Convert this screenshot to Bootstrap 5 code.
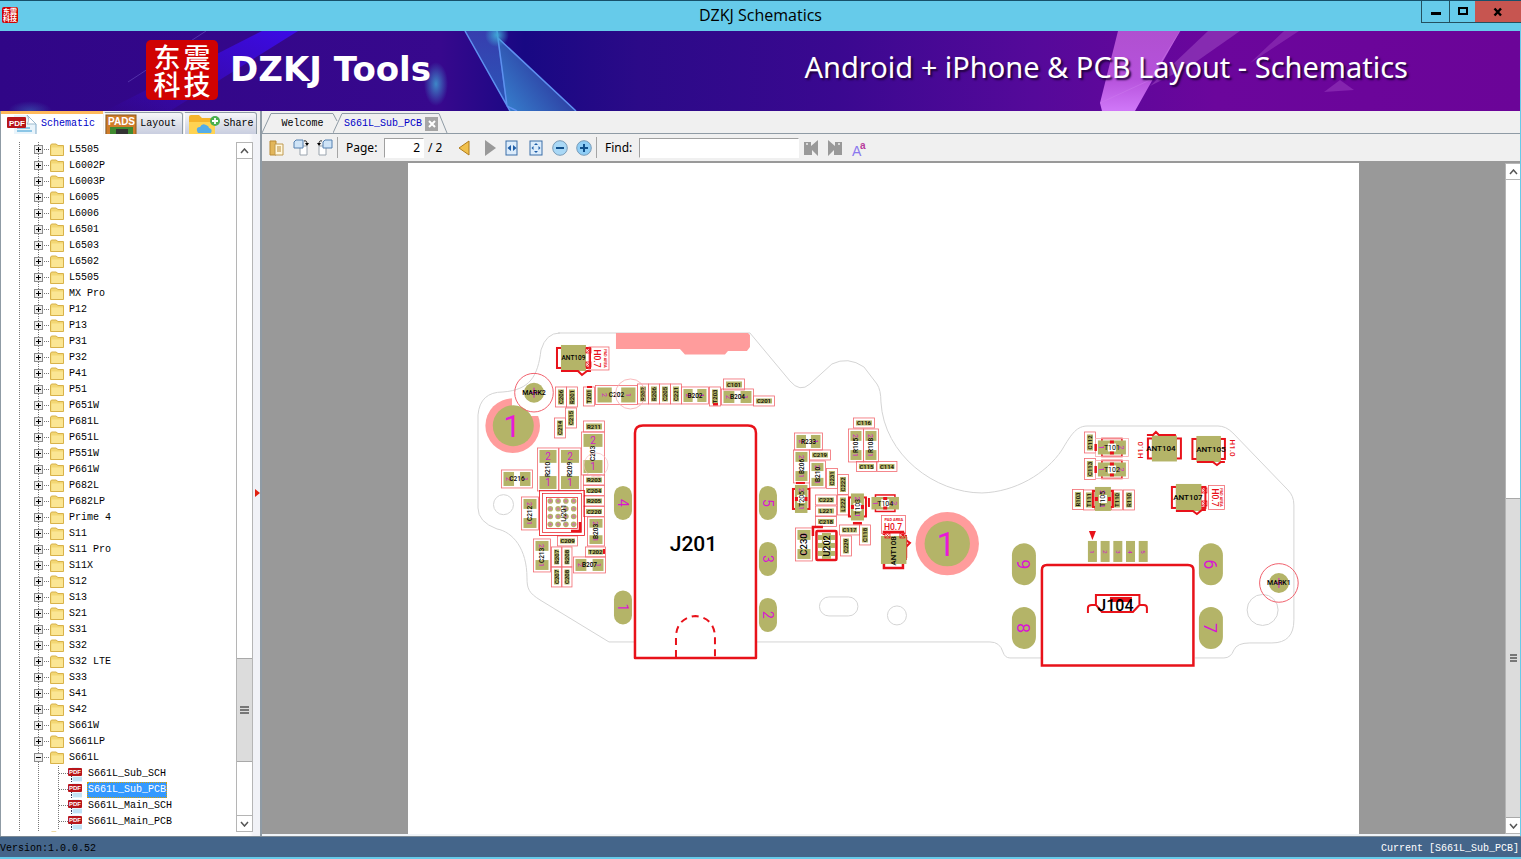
<!DOCTYPE html>
<html lang="en">
<head>
<meta charset="utf-8">
<meta name="viewport" content="width=device-width, initial-scale=1">
<title>DZKJ Schematics</title>
<link href="https://cdn.jsdelivr.net/npm/bootstrap@5.3.0/dist/css/bootstrap.min.css" rel="stylesheet">
<style>
:root{--sky:#66cbea;--slate:#8f9ba5;--face:#f0f0f0}
body{font-family:"Liberation Mono",monospace;font-size:10px;line-height:16px;color:#000;background:var(--sky);overflow:hidden}
button,.plain-link{font:inherit;color:inherit;background:none;border:0;padding:0;text-decoration:none}
.ui-font{font-family:"Noto Sans","Open Sans",sans-serif}
.title-row{height:31px;background:var(--sky);border-top:1px solid #17506a}
.title-text{font-size:16px;line-height:29px;font-family:"Open Sans","Noto Sans",sans-serif}
.logo-box{display:grid;grid-template-columns:1fr 1fr;place-items:center;background:#d00202;color:#fff;font-family:"Noto Sans CJK SC",sans-serif;font-weight:700}
.logo-small{width:16px;height:16px;border-radius:2px;font-size:7px;line-height:7px;padding:1px;margin-left:2px;margin-top:-2px}
.logo-large{width:72px;height:60px;border-radius:5px;font-size:27px;line-height:26px;padding:3px 6px;margin-left:146px;margin-top:-2px;font-weight:500}
.win-buttons{height:22px;border:1px solid #24505f;border-top:0;border-right:0}
.win-buttons button{display:grid;place-items:center}
.win-min{width:27px}.win-max{width:26px;border-left:1px solid #24505f!important}
.win-close{width:46px;background:#c75550!important}
.frame{margin-right:1px}
.banner{height:80px;overflow:hidden;background:#32088a}
.brand{font-family:"DejaVu Sans",sans-serif;font-size:34px;font-weight:700;line-height:60px;color:#fff;margin-left:12px;margin-top:-4px}
.slogan{font-family:"Noto Sans",sans-serif;font-size:29px;font-weight:400;line-height:60px;color:#fff;margin-right:112px;margin-top:-8px;text-shadow:2px 2px 2px #21033e}
.side{width:262px;background:#fff;border-left:1px solid var(--slate);border-right:2px solid var(--slate)}
.side-tabs{height:23px;background:var(--face);gap:1px;padding-right:3px}
.side-tab{height:23px;border:1px solid var(--slate)!important;border-left-color:#fff!important;background:linear-gradient(#f7f7fa,#dcdfe9 55%,#c9cee0)!important;gap:3px;margin-top:1px;border-top-right-radius:3px;overflow:hidden}
.side-tab.on{background:#fff!important;border:0!important;border-top:3px solid #ffb95a!important;border-radius:0;color:#0000c8;margin-top:0}
.side-tab svg{flex:none}
.tree-wrap{padding:8px 3px 4px 0;background:linear-gradient(to left,#f1f2f7 3px,#fff 7px)}
.tree{padding-left:18px;margin:0;list-style:none;overflow:hidden;height:0;min-height:100%;
 background:repeating-linear-gradient(#777 0 1px,#fff 1px 2px) 18px 0/1px 100% no-repeat,repeating-linear-gradient(#777 0 1px,#fff 1px 2px) 37px 0/1px 100% no-repeat}
.tree li{height:16px}
.tree a{height:16px;padding-left:15px}
.twig{width:16px;height:16px;flex:none}
.tree .sheet-row{padding-left:38px}
.row-label{padding:0 1px;margin-left:2px;line-height:14px;height:16px;padding-top:1px}
.row-label.sel{background:#3399ff;color:#fff;outline:1px dotted #d9a300;outline-offset:-1px}
.bar{border-left:1px solid #b5b5b5;background:#fff}
.bar-side{width:17px;border-right:1px solid #b5b5b5}
.bar-doc{width:15px;border-top:1px solid #b5b5b5}
.bar button{height:16px;display:grid;place-items:center;border-bottom:1px solid #b5b5b5}
.bar-side{border-top:1px solid #b5b5b5}
.bar .last{border-bottom:1px solid #b5b5b5;border-top:0}
.thumb{background:#dcdcdc;border:solid #a9a9a9;border-width:1px 0;display:grid;place-items:center}
.splitter{width:4px;background:#f1f2f7;display:grid;align-items:center}
.doc-tabs{height:23px;background:var(--face);border-bottom:1px solid var(--slate)}
.doc-tab{height:20px;border-top:1px solid var(--slate)!important;line-height:20px}
.edge{width:10px;height:20px;flex:none}
.close-x{width:14px;height:14px;background:#a5a5a5!important;display:grid;place-items:center}
.tools{height:27px;background:var(--face);font-size:12px;padding-left:7px}
.tool{width:16px;height:18px;display:grid;place-items:center}
.tools .rule-v{width:1px;height:21px;background:#a5a5a5}
.tools input{height:20px;border:1px solid #a0a0a0;border-right-color:#fff;border-bottom-color:#fff;background:#fff;border-radius:0;padding:0 3px;font:inherit;outline:0}
.page-no{width:40px;text-align:right}.find-in{width:160px}
.desk{background:#999;border-top:2px solid #999;overflow:hidden}
.sheet{width:76.5%;background:#fff;min-height:100%}
.status{height:21px;background:#44658a;border-top:1px solid #7c8a96;line-height:24px;margin-bottom:2px}
.cad{font-family:Roboto,"Liberation Sans",sans-serif}
</style>
</head>
<body class="vh-100 d-flex flex-column">
<header class="title-row d-flex justify-content-between position-relative">
  <div class="d-flex align-items-center"><span class="logo-box logo-small"><span>东</span><span>震</span><span>科</span><span>技</span></span></div>
  <div class="title-text position-absolute start-50 translate-middle-x">DZKJ Schematics</div>
  <div class="win-buttons d-flex">
    <button class="win-min" aria-label="Minimize"><svg width="12" height="12"><rect x="1" y="6" width="10" height="3"/></svg></button>
    <button class="win-max" aria-label="Maximize"><svg width="12" height="12"><rect x="2" y="2" width="8" height="6" fill="none" stroke="#000" stroke-width="2"/></svg></button>
    <button class="win-close" aria-label="Close"><svg width="12" height="10"><path d="M2.500 1.500 9 8.500M9 1.500 2.500 8.500" stroke="#000" stroke-width="2.400"/></svg></button>
  </div>
</header>

<section class="banner frame position-relative d-flex align-items-center flex-shrink-0">
  <svg class="position-absolute w-100 h-100 top-0 start-0" viewBox="0 31 1520 80" preserveAspectRatio="none" aria-hidden="true">
    <defs>
      <linearGradient id="sky"><stop offset="0" stop-color="#300687"/><stop offset=".29" stop-color="#37088d"/><stop offset=".345" stop-color="#180883"/><stop offset=".42" stop-color="#2b0a88"/><stop offset=".55" stop-color="#3a0890"/><stop offset=".68" stop-color="#55099a"/><stop offset=".8" stop-color="#6b069c"/><stop offset="1" stop-color="#6b0498"/></linearGradient>
      <linearGradient id="ray" x1="1" y1="0" x2="0" y2="1"><stop offset="0" stop-color="#3c0be6"/><stop offset="1" stop-color="#3c0be6" stop-opacity="0"/></linearGradient>
      <linearGradient id="prism" x1="0" y1="0" x2="0" y2="1"><stop offset="0" stop-color="#3a4bb8"/><stop offset="1" stop-color="#2e6cc4"/></linearGradient>
      <linearGradient id="prism2" x1="0" y1="1" x2="1" y2=".3"><stop offset="0" stop-color="#3787d2"/><stop offset="1" stop-color="#2a2290"/></linearGradient>
      <linearGradient id="pink" x1="0" y1="0" x2="0" y2="1"><stop offset="0" stop-color="#b050d0"/><stop offset=".6" stop-color="#b652dc"/><stop offset="1" stop-color="#d078f8"/></linearGradient>
      <radialGradient id="glow"><stop offset="0" stop-color="#3fa6d6"/><stop offset="1" stop-color="#3fa6d6" stop-opacity="0"/></radialGradient>
    </defs>
    <rect y="31" width="1520" height="80" fill="url(#sky)"/>
    <path d="M262 31H298L170 111H105Z" fill="url(#ray)"/>
    <path d="M206 31 128 82M186 50 150 74" stroke="#6a4fc0" stroke-width="1" opacity=".6"/>
    <ellipse cx="436" cy="84" rx="12" ry="22" fill="url(#glow)" opacity=".8"/>
    <ellipse cx="30" cy="111" rx="22" ry="10" fill="url(#glow)" opacity=".35"/>
    <path d="M465 31H497L507 105 510 111Z" fill="url(#prism)" opacity=".8"/>
    <path d="M497 37 576 111H510L506 104Z" fill="url(#prism2)"/>
    <path d="M465 31 510 111M497 31 507 106 517 111M498 38 576 111" fill="none" stroke="#5e90f0" stroke-width="1.500"/>
    <circle cx="497" cy="35" r="12" fill="url(#glow)"/>
    <path d="M1118 31H1180L1135 111H1102L1100 103Z" fill="url(#pink)"/>
    <path d="M1208 31H1240L1190 66 1150 86Z" fill="#9a44c0" opacity=".6"/>
    <path d="M1284 31H1299L1250 63Z" fill="#8c2fb4" opacity=".7"/>
    <path d="M1324 92 1340 80 1354 90Z" fill="#8424ae"/>
    <path d="M1100 103 1150 80 1180 31" fill="none" stroke="#cf80ee" opacity=".4"/>
  </svg>
  <div class="logo-box logo-large position-relative"><span>东</span><span>震</span><span>科</span><span>技</span></div>
  <div class="brand position-relative">DZKJ Tools</div>
  <div class="slogan position-relative ms-auto">Android + iPhone &amp; PCB Layout - Schematics</div>
</section>

<main class="frame d-flex flex-grow-1" style="min-height:0">
  <aside class="side d-flex flex-column flex-shrink-0">
    <nav class="side-tabs d-flex flex-shrink-0">
      <button class="side-tab on d-flex align-items-center" style="width:103px">
        <svg width="33" height="20" class="ms-1"><path d="M9 1H22L31 10V20H9Z" fill="#e9f4fb"/><path d="M22 1 31 10V20" fill="none" stroke="#7da9c8"/><path d="M22 1C25 5 23 9 22 10H31Z" fill="#fff" stroke="#9dbbd0"/><path d="M12 14H25M12 17H27" stroke="#8cc6e6" stroke-width="2"/><rect x="2" y="3" width="19" height="11" rx="1" fill="#b8151a"/><text x="4" y="12" font-size="8" font-weight="700" font-family="Liberation Sans" fill="#fff">PDF</text></svg>Schematic</button>
      <button class="side-tab d-flex align-items-center" style="width:79px">
        <svg width="32" height="22"><rect x="1" y="2" width="30" height="24" fill="#cf7c2a" stroke="#8c5a1c"/><text x="3" y="12" font-size="10" font-weight="700" font-family="Liberation Sans" fill="#fff">PADS</text><path d="M5 14H28V22H5Z" fill="#3f8a30"/><path d="M11 16H23V22H11Z" fill="#333"/></svg>Layout</button>
      <button class="side-tab d-flex align-items-center" style="width:74px">
        <svg width="32" height="22" class="ms-1"><path d="M0 4Q0 2 2 2H10L13 5H25Q26 5 26 8V22H0Z" fill="#f6b42a"/><path d="M0 9H26V22H0Z" fill="#ffd352"/><path d="M8 18Q7 14 11 14Q13 10 17 12Q20 13 20 15Q24 16 22 20H9Z" fill="#55ade8"/><circle cx="26" cy="8" r="5" fill="#49b04e"/><path d="M26 5V11M23 8H29" stroke="#fff" stroke-width="1.800"/></svg>Share</button>
    </nav>
    <div class="d-flex flex-grow-1" style="min-height:0">
      <div class="tree-wrap d-flex flex-grow-1">
        <ul class="tree flex-grow-1" id="tree"></ul>
        <div class="bar bar-side d-flex flex-column">
          <button aria-label="Scroll up"><svg width="9" height="6"><path d="M1 5 4.500 1 8 5" fill="none" stroke="#555" stroke-width="1.500"/></svg></button>
          <div style="flex:501"></div><div class="thumb" style="flex:103"><svg width="9" height="8"><path d="M0 1H9M0 4H9M0 7H9" stroke="#555" stroke-width="1.500"/></svg></div><div style="flex:53;border-bottom:1px solid #b5b5b5"></div>
          <button class="last" aria-label="Scroll down"><svg width="9" height="6"><path d="M1 1 4.500 5 8 1" fill="none" stroke="#555" stroke-width="1.500"/></svg></button>
        </div>
      </div>
      <div class="splitter position-relative flex-shrink-0"><svg class="position-absolute end-0 mt-3" width="6" height="8"><path d="M1 0 6 4 1 8Z" fill="#e02010"/></svg></div>
    </div>
  </aside>

  <section class="d-flex flex-column flex-grow-1" style="min-width:0">
    <nav class="doc-tabs d-flex align-items-end flex-shrink-0">
      <svg class="edge"><path d="M0 20 9 0.500H10" fill="none" stroke="#8f9ba5"/></svg>
      <button class="doc-tab" style="width:61px">Welcome</button>
      <svg class="edge"><path d="M0 .500 4 8M0 20 9 .500H10" fill="none" stroke="#8f9ba5"/></svg>
      <div class="doc-tab d-flex align-items-center" style="color:#0000c8;width:95px;gap:3px;padding-left:1px"><button>S661L_Sub_PCB</button><button class="close-x" aria-label="Close tab"><svg width="8" height="8"><path d="M1 1 7 7M7 1 1 7" stroke="#fff" stroke-width="2"/></svg></button></div>
      <svg class="edge"><path d="M0 .500H1L9 20" fill="none" stroke="#8f9ba5"/></svg>
    </nav>
    <div class="tools ui-font d-flex align-items-center flex-shrink-0">
      <button class="tool" aria-label="Open"><svg width="16" height="16"><path d="M1 1H7V15H1Z" fill="#e2b65a" stroke="#b98a35"/><path d="M6 4H14V15H6Z" fill="#fff7dc" stroke="#c09a50"/><path d="M8 7H12M8 9H12M8 11H12" stroke="#b98a35"/></svg></button>
      <button class="tool ms-2" aria-label="Rotate right"><svg width="16" height="17"><path d="M7 7H14V16H7Z" fill="#fff" stroke="#9aa4ae"/><path d="M3 1H10V9H1V3Z" fill="#cfe4f7" stroke="#5580b0"/><path d="M11 2Q14 1 14 5" fill="none" stroke="#222"/><path d="M12 4H16L14 7Z"/></svg></button>
      <button class="tool ms-2" aria-label="Rotate left"><svg width="16" height="17"><path d="M2 7H9V16H2Z" fill="#fff" stroke="#9aa4ae"/><path d="M8 1H15V9H6V3Z" fill="#cfe4f7" stroke="#5580b0"/><path d="M5 2Q2 1 2 5" fill="none" stroke="#222"/><path d="M0 4H4L2 7Z"/></svg></button>
      <span class="rule-v ms-1 me-2"></span>
      <label for="page-no" style="width:38px">Page:</label>
      <input id="page-no" class="page-no" value="2"><span class="ms-1" style="width:20px">/ 2</span>
      <button class="tool ms-2" aria-label="Previous page"><svg width="12" height="16"><path d="M11 1V15L1 8Z" fill="#f0c04c" stroke="#b07c1c"/></svg></button>
      <button class="tool ms-2 ps-1" aria-label="Next page"><svg width="12" height="16"><path d="M1 0V16L12 8Z" fill="#999"/></svg></button>
      <button class="tool ms-2" aria-label="Fit width"><svg width="14" height="16"><rect x="1" y="1" width="11" height="14" fill="#dcecfb" stroke="#3a6ea8"/><path d="M6 5V11L2.500 8ZM8 5V11L11.500 8Z" fill="#1f5ea8"/></svg></button>
      <button class="tool ms-2" aria-label="Fit page"><svg width="14" height="16"><rect x="1" y="1" width="12" height="14" fill="#dcecfb" stroke="#3a6ea8"/><path d="M7 3 9 5H5ZM7 13 9 11H5ZM2.500 8 4.500 6V10ZM11.500 8 9.500 6V10Z" fill="#1f5ea8"/></svg></button>
      <button class="tool ms-2" aria-label="Zoom out"><svg width="16" height="16"><circle cx="8" cy="8" r="7.300" fill="#a9d8f6" stroke="#7a9cb8"/><path d="M4 8H12" stroke="#10508c" stroke-width="2"/></svg></button>
      <button class="tool ms-2" aria-label="Zoom in"><svg width="16" height="16"><circle cx="8" cy="8" r="7.300" fill="#8fcdf5" stroke="#7a9cb8"/><path d="M4 8H12M8 4V12" stroke="#10508c" stroke-width="2"/></svg></button>
      <span class="rule-v ms-1 me-2"></span>
      <label for="find-in" style="width:34px">Find:</label>
      <input id="find-in" class="find-in">
      <button class="tool ms-1" aria-label="Find previous"><svg width="16" height="16"><path d="M1 2H8V6L15 0V16L9 10V15H1Z" fill="#999"/><circle cx="4" cy="4" r="1" fill="#eee"/></svg></button>
      <button class="tool ms-2" aria-label="Find next"><svg width="16" height="16"><path d="M1 0 8 6V2H15V15H7V10L1 16Z" fill="#999"/><circle cx="12" cy="4" r="1" fill="#eee"/></svg></button>
      <button class="tool ms-2" aria-label="Match case"><svg width="17" height="20"><text x="1" y="17" font-size="14" font-family="Liberation Sans" fill="#8a78ee">A</text><text x="9" y="10" font-size="10" font-weight="700" font-family="Liberation Sans" fill="#b83c9c">a</text></svg></button>
    </div>
    <div class="desk d-flex flex-grow-1" style="min-height:0">
      <div class="flex-grow-1 d-flex justify-content-center overflow-hidden">
        <div class="sheet"><svg class="w-100 d-block cad" id="board" viewBox="408 163 951 671" role="img" aria-label="S661L_Sub_PCB board layout"></svg></div>
      </div>
      <div class="bar bar-doc d-flex flex-column">
        <button aria-label="Page up"><svg width="9" height="6"><path d="M1 5 4.500 1 8 5" fill="none" stroke="#555" stroke-width="1.500"/></svg></button>
        <div style="flex:320"></div><div class="thumb" style="flex:320"><svg width="9" height="8"><path d="M1 1H8M1 4H8M1 7H8" stroke="#555" stroke-width="1.500"/></svg></div>
        <button class="last" aria-label="Page down"><svg width="9" height="6"><path d="M1 1 4.500 5 8 1" fill="none" stroke="#555" stroke-width="1.500"/></svg></button>
      </div>
    </div>
    <div style="height:2px;background:#f0f4f8"></div>
  </section>
</main>
<footer class="status d-flex justify-content-between flex-shrink-0"><span>Version:1.0.0.52</span><span class="text-white" style="padding-right:2px">Current [S661L_Sub_PCB]</span></footer>

<script>
const models="L5505,L6002P,L6003P,L6005,L6006,L6501,L6503,L6502,L5505,MX Pro,P12,P13,P31,P32,P41,P51,P651W,P681L,P651L,P551W,P661W,P682L,P682LP,Prime 4,S11,S11 Pro,S11X,S12,S13,S21,S31,S32,S32 LTE,S33,S41,S42,S661W,S661LP,S661L".split(",");
const sheets=["S661L_Sub_SCH","S661L_Sub_PCB","S661L_Main_SCH","S661L_Main_PCB"];
const folder='<svg width="16" height="16" class="flex-shrink-0"><path d="M.5 4Q.5 2 2 2H6L8 3.500H13.500V13.500H.5Z" fill="#f3d774" stroke="#d8b24a"/><path d="M1.500 5.500H13V13H1.500Z" fill="#fbe694"/></svg>';
const twig=open=>`<svg class="twig"><rect x=".5" y="3.500" width="8" height="8" fill="#eee" stroke="#8c8c8c"/><path d="M2 7.500H7${open?'':'M4.500 5V10'}" stroke="#000"/><path d="M10 7.500H16" stroke="#777" stroke-dasharray="1 1"/></svg>`;
const pdf='<svg width="28" height="16" class="flex-shrink-0"><path d="M1.500 0V16M2 7.500H12" stroke="#777" stroke-dasharray="1 1"/><path d="M15 1H22L25 5V16H15Z" fill="#e6f4fc"/><path d="M16 12H25M16 14H25" stroke="#9bd0ee"/><path d="M14.500 9V16" stroke="#335" stroke-dasharray="2 1"/><rect x="11" y="2" width="14" height="8" rx="1" fill="#b8151a"/><text x="12" y="8" font-size="6" font-weight="700" font-family="Liberation Sans" fill="#fff">PDF</text></svg>';
document.getElementById("tree").innerHTML=models.map((m,i)=>`<li><a class="plain-link d-flex" href="#">${twig(i==models.length-1)}${folder}<span class="row-label">${m}</span></a></li>`).join("")
 +sheets.map((s,i)=>`<li><a class="plain-link d-flex sheet-row" href="#">${pdf}<span class="row-label${i==1?' sel':''}">${s}</span></a></li>`).join("")
 +`<li><a class="plain-link d-flex" href="#" aria-label="Next folder"><svg class="twig"></svg>${folder}</a></li>`;

const O="#b4b468",R="#e8121a",M="#d022c8",P="#ff9c9c";
let out="";
const add=s=>out+=s;
const rect=(x,y,w,h,fill,stroke="none",sw=1,rx=0)=>add(`<rect x="${x}" y="${y}" width="${w}" height="${h}" rx="${rx}" fill="${fill}" stroke="${stroke}" stroke-width="${sw}"/>`);
const line=(d,stroke=R,sw=1,extra="")=>add(`<path d="${d}" fill="none" stroke="${stroke}" stroke-width="${sw}" ${extra}/>`);
const circ=(x,y,r,fill,stroke="none",sw=1)=>add(`<circle cx="${x}" cy="${y}" r="${r}" fill="${fill}" stroke="${stroke}" stroke-width="${sw}"/>`);
const text=(t,x,y,size,rot=0,fill="#000",weight=400)=>add(`<text font-size="${size}" text-anchor="middle" fill="${fill}" font-weight="${weight}" transform="translate(${x} ${y}) rotate(${rot})" y="${size*.36}">${t}</text>`);

// board edge, holes
line("M558 333H750L790 381Q800 393 810 384L832 364Q848 356 864 367L877 384Q881 390 881 402C884 455 935 493 982 493C1015 492 1046 474 1062 450C1072 433 1077 426 1088 426H1218Q1226 426 1233 433L1288 490Q1294 496 1294 505V620Q1294 643 1272 643H1250Q1237 643 1234 650Q1231 658 1224 658H1195M1041 658H1010Q1005 658 1003 652Q1000 642 990 642H757M634 642H609L540 600C529 593 527 589 527 578C527 549 513 532 497 529Q478 522 478 508V415Q480 392 503 392C530 390 538 376 541 350Q546 333 560 333","#d4d4d4");
circ(503.5,504.700,10,"none","#d4d4d4");circ(897,615.500,9.500,"none","#d4d4d4");circ(1262.700,610,15.500,"none","#d4d4d4");rect(819.500,597,38.500,19,"none","#d4d4d4",1,9.500);
add(`<path d="M616 333H748L750 335V347L747 351H728L725 354.500H685L680 349H616Z" fill="${P}"/>`);

// round test pads
circ(512.700,425.700,27.300,P);rect(512,397,30,19,"#fff");circ(513.300,425.700,20.500,O);text("1",512,426,31,0,"#e81ad8");
circ(947.300,543.700,31.700,P);circ(947.300,543.700,22.700,O);text("1",946,544,34,0,"#e81ad8");
[["MARK2",534,392.700],["MARK1",1279,583]].forEach(([t,x,y])=>{circ(x,y,19.300,"none","#f0606c");circ(x,y,10,O);line(`M${x-4} ${y}H${x+4}M${x} ${y-5}V${y+5}`,M);text(t,x,y,7,0,"#000",500)});

// small parts filled with one pad: [label, x, y, w, h]
const small=`C206 555.5 387 11 20,R201 566.5 387 11 20,T201 583.5 387 11 19,R202 637.5 384 11 20,R206 648.5 384 11 20,C205 659.5 384 11 20,C221 670.5 384 11 20,T203 709.5 387 11 19,C101 723.5 379 21 11,C201 753.5 396 21 10,C215 565.5 408 11 20,C214 554.5 418 11 20,R211 583.5 421 21 11,R203 583.5 475 21 10,C204 583.5 485.5 21 10,R205 583.5 496 21 10,C220 583.5 506.5 21 10,C209 557.5 536 20 10,T202 585.5 547 20 10,R207 551.5 547 10 20,R208 562 547 10 20,C207 551.5 567 10 20,C208 562 567 10 20,C219 809.5 450 21 10,C231 826.5 468.5 11 20,C222 837.5 474.5 11 20,C223 815.5 495 21 10,L221 815.5 506 21 10,C218 815.5 516.5 21 10,L222 837.5 495 11 20,C117 839.5 525 20 10,C118 859.5 525 11 20,C229 840.5 536 11 20,C116 853.5 418 21 10,C115 856.5 461.5 20 10,C114 877 461.5 20 10,C112 1084.5 432 11 21,C113 1084.5 458.5 11 21,R103 1072.5 489.5 11 20,T111 1083.5 490 11 20,T110 1111.5 490 11 20,R110 1123.5 490 11 20`;
small.split(",").forEach(s=>{let [t,x,y,w,h]=s.split(" ");x=+x;y=+y;w=+w;h=+h;const v=h>w;
 rect(x,y,w,h,"none","#f26a70",.8);rect(x+2.500,y+2.500,w-5,h-5,O);text(t,x+w/2,y+h/2,6,v?-90:0,"#000",500)});

// parts with two end pads: [label, x, y, w, h, text size]
const pair=`C202 595.5 385.5 42 19 6.5,B202 681.5 387 27 17 6.5,B204 721.5 389 32 16 6.5,C216 501.5 470 31 18 6.5,C203 581.5 432 23 43 6.5,R210 537.5 448 21 43 6.5,R209 559 448 22 43 6.5,C212 521.5 497 17 33 6.5,B203 587.5 517 17 29 6.5,B207 573.5 557 32 16 6.5,C213 533.5 539 17 33 6.5,R233 794.5 433 28 17 6.5,B206 793.5 450 16 33 6.5,B210 809.5 461 16 27 6.5,C230 795.5 528 17 33 9.5,R105 848.5 429 15 33 6.5,R108 863.5 429 15 33 6.5`;
pair.split(",").forEach(s=>{let [t,x,y,w,h,f]=s.split(" ");x=+x;y=+y;w=+w;h=+h;f=+f;const v=h>w;
 rect(x,y,w,h,"none","#f26a70",.8);
 const pw=v?w-4:w*.34,ph=v?h*.3:h-4;
 rect(x+2,y+2,pw,ph,O);rect(x+w-2-pw,y+h-2-ph,pw,ph,O);
 const n=h>40?10:7,d=h>40?0:90;
 text("2",v?x+w/2:x+2+pw/2,v?y+2+ph/2:y+h/2,n,d,M);text("1",v?x+w/2:x+w-2-pw/2,v?y+h-2-ph/2:y+h/2,n,d,M);
 text(t,x+w/2,y+h/2,f,v?-90:0,"#000",500)});
circ(630.500,394,15,"none","#f7a8ac",.8);circ(596,465,12,"none","#f7c0c2",.7);

// diodes: olive body with red side brackets
[["T205",795,485,12.500,28],["T103",851,493.500,13,27],["T104",871.500,497,27.500,12.500],["T101",1098,440.500,28,14],["T102",1098,462.500,28,14],["T105",1095,487,16,24]].forEach(([t,x,y,w,h])=>{const v=h>w;
 if(v)rect(x-2,y+4,w+4,h-8,"none",R,2);else rect(x+4,y-2,w-8,h+4,"none",R,1.500);
 rect(x,y,w,h,O);rect(x+w/2-4,y+h/2-4,8,8,"#fff");v?line(`M${x} ${y+h/2}H${x+3}M${x+w-3} ${y+h/2}H${x+w}`,R,4):line(`M${x+w/2} ${y}V${y+3}M${x+w/2} ${y+h-3}V${y+h}`,R,4);
 text("1",v?x+w/2:x+4,v?y+h-5:y+h/2,7,90,M);text("2",v?x+w/2:x+w-4,v?y+5:y+h/2,7,90,M);text(t,x+w/2,y+h/2,7,v?-90:0)});
rect(1095.500,438.500,33,18,"none","#f7a8ac",.8);rect(1095.500,460.500,33,18,"none","#f7a8ac",.8);
rect(1094.500,444,2.500,7,R);rect(1094.500,466,2.500,7,R);rect(796,482,9,2,R);rect(853,522,9,2.500,R);rect(868,498,2,9,R);
rect(587,386,5,2,R);rect(713,403,5,2.500,R);rect(603,549,2,5,R);

// BGA package
rect(539.500,490.500,45,45,"none",R,.8);rect(542.500,493.500,39,39,"none",R,.7);rect(546.500,497.500,31,31,"none",R,.7);
for(let i=0;i<4;i++)for(let j=0;j<4;j++){circ(550.300+i*7.800,501+j*7.800,2.800,O);circ(550.300+i*7.800,501+j*7.800,1.500,"#c880a0")}
line("M571 531H580V522",R,2.500);text("U201",563,513,7.500,-90);
rect(816.500,531,20,29,"#fff",R,2.500,1);for(let i=0;i<3;i++){rect(818,535+i*8,6,5,O);rect(829,535+i*8,6,5,O)}rect(822,533,9,26,O);rect(823,540,7,3,"#fff");rect(823,548,7,3,"#fff");line("M813 536V527H823",R,2.500);text("U202",826.500,546,9,-90,"#000",500);

// antenna clips
const clip=(t,x,y,w,h,tx)=>{rect(x-4,y+3,5,h-6,"none",R,2);rect(x+w-1,y+3,5,h-6,"none",R,2);rect(x,y,w,h,O);text(t,tx??x+w/2,y+h/2,t=="ANT109"?6.5:8,0,"#000",500)};
clip("ANT109",561,345,25,26);line("M561 371H578L582 375 587 371H591",R,2);
clip("ANT107",1176,484,25.500,27,1188);line("M1176 511H1193L1197 514 1202 510H1206",R,2);
clip("ANT104",1152,435.500,25,26,1161);line("M1147 435H1153L1156 432 1159 435H1176",R,2);
clip("ANT105",1196.500,436,24.500,26,1211);line("M1197 462H1213L1217 465 1221 462H1225",R,2);
line("M884 535V532H903V536M884 563V568H903V564M906 537V558",R,2.500);line("M906 535V540L910 543 906 547V560",R,2);rect(881,536,25.500,28,O);text("ANT108",893.500,551,8,-90,"#000",500);
[[589,347,20,23],[1208.500,485.500,16,24]].forEach(([x,y,w,h])=>{rect(x,y,w,h,"none","#f26a70",.8);text("H0.7",x+w*.42,y+h/2,8.500,90,R,500);text("PAD AREA",x+w*.8,y+h/2,4,90,R,700)});
rect(881.500,515.500,24,18,"none","#f26a70",.8);text("PAD AREA",894,519.500,4,0,R,700);text("H0.7",893,526.500,8.500,0,R,500);
[[586,348],[586,362],[1202,488],[1202,501],[885,533],[900,533]].forEach(([x,y])=>{rect(x,y,5,5,"none",R,.8);line(`M${x} ${y}l5 5m0-5l-5 5`,R,.7)});
text("H1.0",1140,450,8,-90,R,500);text("H1.0",1233,448,8,90,R,500);

// oval pads
[["4",614,486,18,34,14],["1",614,590.500,18,34,14],["5",759,486,18,34,14],["3",759,542,18,34,14],["2",759,598,18,34,14],["9",1012,543.300,24,42,18],["8",1012,607,24,42,18],["6",1199,543.300,24,42,18],["7",1199,607,24,42,18]].forEach(([t,x,y,w,h,f])=>{rect(x,y,w,h,O,"none",1,w/2);text(t,x+w/2,y+h/2,f,90,"#d818d0")});

// connectors
line("M635 658V433Q635 425.500 643 425.500H748Q756 425.500 756 433V658Z",R,2.500,'stroke-linejoin="round"');text("J201",693.500,543.500,21,0,"#000",500);
line("M676 657V638C676 622 686 617 695.500 616C705 617 715 622 715 638V657",R,2,'stroke-dasharray="7 5"');
line("M1042 665.500V570Q1042 565 1047 565H1188Q1193.500 565 1193.500 570V665.500Z",R,2.500);
for(let i=0;i<5;i++){rect(1088+i*12.700,541,9,21,O);text(i+1,1092.500+i*12.700,552,6,90,M)}
add(`<path d="M1089 531H1096L1092.500 540Z" fill="${R}"/>`);
line("M1088 613V608Q1088 605 1092 605H1096V595H1139.500V605H1144Q1147 605 1147 608V613M1096 605 1102 612H1133L1139.500 605",R,2);rect(1110,597,22,5,R);
text("J104",1115.500,605.500,16,0,"#000",500);
document.getElementById("board").innerHTML=out;
</script>
<script src="https://cdn.jsdelivr.net/npm/bootstrap@5.3.0/dist/js/bootstrap.bundle.min.js"></script>
</body>
</html>
